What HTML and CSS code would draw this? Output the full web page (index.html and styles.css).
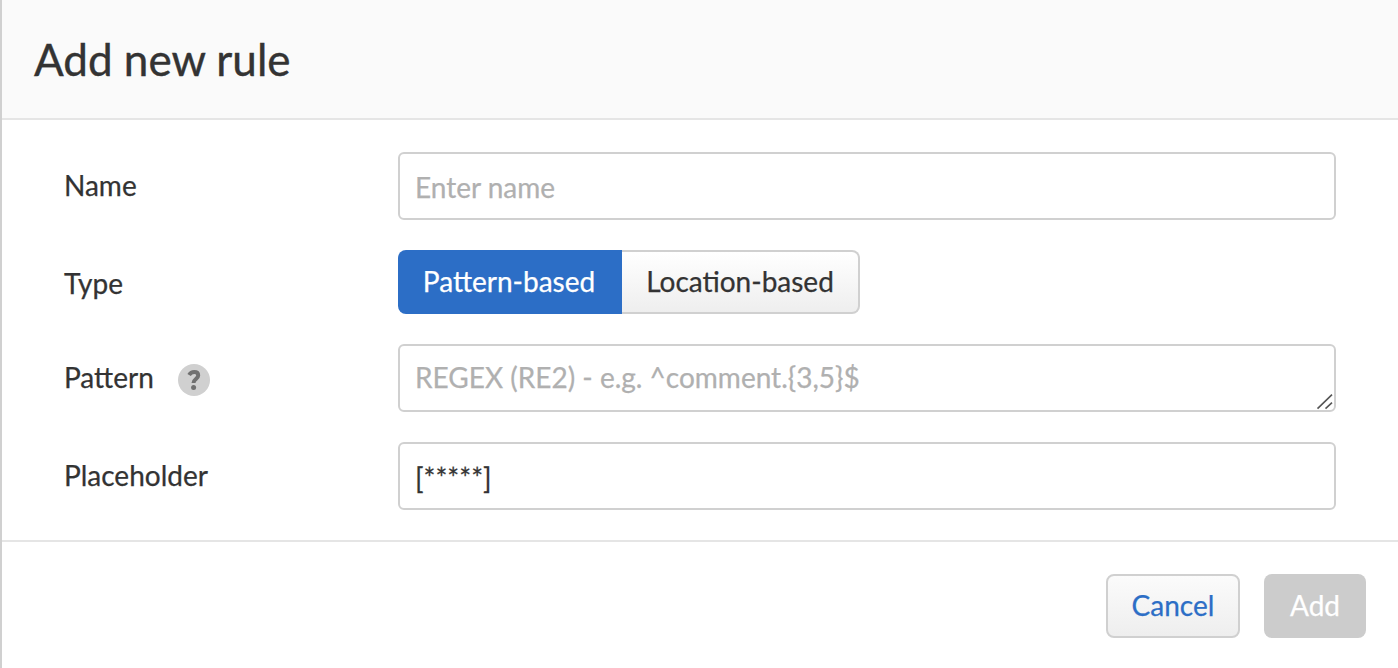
FILE: index.html
```html
<!DOCTYPE html>
<html lang="en">
<head>
<meta charset="utf-8">
<title>Add new rule</title>
<link rel="stylesheet" href="styles.css">
</head>
<body>
<main class="dialog">
  <header class="header"><h1 class="title">Add new rule</h1></header>
  <form class="form">
    <div class="row row-name"><label class="label" for="name">Name</label><input class="control" id="name" type="text" placeholder="Enter name"></div>
    <div class="row row-type"><span class="label label-type">Type</span>
      <div class="segmented"><button class="segment segment-active" type="button">Pattern-based</button><button class="segment segment-last" type="button">Location-based</button></div>
    </div>
    <div class="row row-pattern"><div class="label"><span>Pattern</span>
      <svg class="help" width="32" height="32" viewBox="0 0 32 32"><circle cx="16" cy="16" r="16" fill="#d0d0d0"/><path d="M11.1 11C12.4 8.9 14 8.1 16.2 8.1c2.4 0 4 1.3 4 3.4 0 3.5-4.7 3.6-4.7 7.5" fill="none" stroke="#707070" stroke-width="4"/><circle cx="15.6" cy="23.6" r="2.5" fill="#707070"/></svg></div>
      <div class="area"><div class="control area-text">REGEX (RE2) - e.g. ^comment.{3,5}$</div>
        <svg class="grip" width="18" height="18" viewBox="0 0 18 18"><path d="M1.5 15.7 16 1.7M9.5 15.7 16 9.7" fill="none" stroke="#555" stroke-width="1.6"/></svg></div>
    </div>
    <div class="row row-placeholder"><label class="label" for="placeholder">Placeholder</label><input class="control control-low" id="placeholder" type="text" value="[*****]"></div>
  </form>
  <footer class="footer"><button class="button cancel" type="button">Cancel</button><button class="button add" type="button" disabled>Add</button></footer>
</main>
</body>
</html>
```

FILE: styles.css
```css
* { box-sizing: border-box; }
body { margin: 0; font-family: Lato, sans-serif; font-size: 28px; color: #333; background: #fff; -webkit-text-stroke: 0.25px; }
button, input { font: inherit; margin: 0; -webkit-text-stroke: 0.25px; }
.dialog { height: 668px; border-left: 2px solid #d0d0d0; display: flex; flex-direction: column; }
.header { height: 120px; background: #fafafa; border-bottom: 2px solid #e5e5e5; padding: 0 32px; display: flex; align-items: center; }
.title { margin: 0; font-size: 44px; font-weight: 400; line-height: 54px; -webkit-text-stroke: 0.4px; }
.form { height: 422px; padding: 32px 62px 0; border-bottom: 2px solid #e5e5e5; }
.row { display: grid; grid-template-columns: 334px 938px; align-items: center; height: 68px; }
.row-type { height: 64px; margin-top: 30px; }
.row-pattern { margin-top: 30px; }
.row-placeholder { margin-top: 30px; }
.label { display: flex; align-items: center; line-height: 34px; padding-bottom: 2px; }
.label-type { padding: 2px 0 0; }
.control { width: 938px; height: 68px; padding: 2px 15px 0; border: 2px solid #d0d0d0; border-radius: 6px; background: #fff; color: #333; outline: 0; }
.control-low { padding-top: 4px; }
.control::placeholder { color: #b0b0b0; opacity: 1; }
.segmented { display: flex; }
.segment { height: 64px; width: 224px; border: 0; border-radius: 8px 0 0 8px; padding: 0 2px 2px 0; }
.segment-active { background: #2c6ec6; color: #fff; }
.segment-last { width: 238px; border: 2px solid #d0d0d0; border-left: 0; border-radius: 0 8px 8px 0; padding-right: 0; background: linear-gradient(#fff, #eee); color: #333; }
.help { position: relative; top: 1px; margin: 4px 0 0 24px; }
.area { position: relative; }
.area-text { line-height: 34px; padding-top: 14px; color: #b0b0b0; }
.grip { position: absolute; right: 2px; bottom: 1px; }
.footer { display: flex; justify-content: flex-end; gap: 24px; padding: 32px 32px 0; }
.button { height: 64px; border-radius: 8px; padding: 0 0 2px; }
.cancel { width: 134px; border: 2px solid #d0d0d0; background: linear-gradient(#fbfbfb, #eee); color: #2c6ec6; }
.add { width: 102px; border: 0; background: #ccc; color: #fff; }
```
